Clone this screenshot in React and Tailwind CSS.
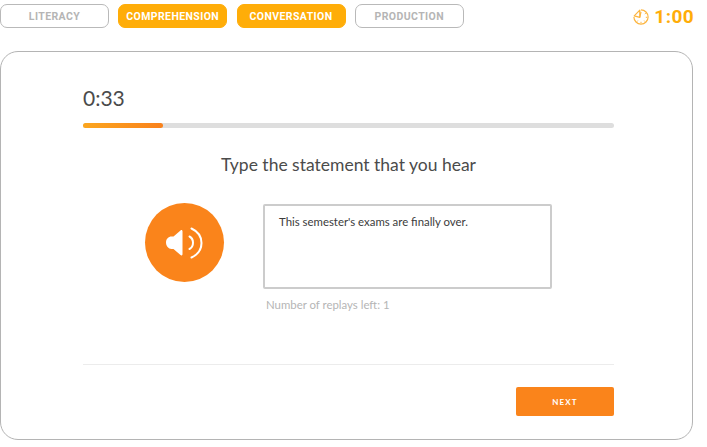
import React from "react";

const tabs = [
  { label: "LITERACY", active: false },
  { label: "COMPREHENSION", active: true },
  { label: "CONVERSATION", active: true },
  { label: "PRODUCTION", active: false },
];

function ClockIcon() {
  return (
    <svg width="16" height="16" viewBox="0 0 16 16" fill="none" stroke="#fcb53f" strokeWidth="1.200">
      <path d="M8 .9a7.100 7.100 0 1 1-7.100 7.100" />
      <path d="M6.800 1.200 1.200 6.800l5.600 1.500z" strokeLinejoin="round" />
      <path d="M6.800 8.300 8 2.800" />
      <path d="M8 12.800v1.400M4.800 11.600l-.8 1M11.200 11.600l.8 1M12.800 8.300h1.400M11.800 5l1-.7" strokeWidth="1" />
    </svg>
  );
}

function SpeakerIcon() {
  return (
    <svg width="39" height="32" viewBox="0 0 39 32" fill="none">
      <path d="M1 15.500c0-3.500 2.500-6 5.500-6h2L15.500 3.500c1-.9 2-.5 2 1v22.500c0 1.500-1 1.900-2 1L8.500 22h-2c-3 0-5.500-3-5.500-6.500z" fill="#fff" />
      <path d="M24.500 9.500c2.300 1.200 3.500 3.400 3.500 6.300s-1.200 5-3.500 6.200" stroke="#fff" strokeWidth="2" strokeLinecap="round" />
      <path d="M26.500 1.500c6 2.800 10 8 10 14.500s-4 11.700-10 14.500" stroke="#fff" strokeWidth="2" strokeLinecap="round" />
    </svg>
  );
}

export default function App() {
  return (
    <div className="w-[707px] h-[447px] bg-white overflow-hidden font-['Lato',sans-serif]">
      <div className="flex items-start h-[51px] pt-[4px]">
        <div className="flex gap-[9.250px]">
          {tabs.map((t) => (
            <div
              key={t.label}
              className={
                t.active
                  ? "w-[109px] h-[24px] pt-[1px] flex items-center justify-center rounded-[7px] border border-[#ffad08] bg-[#ffad08] text-white text-[10.500px] font-bold tracking-[0.4px] font-['Roboto',sans-serif]"
                  : "w-[109px] h-[24px] pt-[1px] flex items-center justify-center rounded-[7px] border border-[#b9b9b9] bg-white text-[#b5b5b5] text-[10.500px] font-bold tracking-[0.4px] font-['Roboto',sans-serif]"
              }
            >
              {t.label}
            </div>
          ))}
        </div>
        <div className="flex items-center ml-auto mr-[13px] mt-[1px] h-[24px] gap-[5px]">
          <ClockIcon />
          <span className="text-[#ffad08] text-[19px] font-bold font-['Roboto',sans-serif] tracking-[0.4px]">1:00</span>
        </div>
      </div>

      <div className="w-[693px] h-[389px] rounded-[18px] border border-[#b4b4b4] pl-[82px] pr-[78px] pt-[33px]">
        <div className="text-[21px] leading-[26px] text-[#4b4b4b]">0:33</div>
        <div className="mt-[12px] h-[5px] rounded-full bg-[#dedede]">
          <div className="h-full w-[80px] rounded-full bg-gradient-to-r from-[#fba61f] to-[#f9811c]" />
        </div>
        <div className="mt-[25px] text-center text-[17.500px] leading-[24px] text-[#4b4b4b]">
          Type the statement that you hear
        </div>
        <div className="flex mt-[27px] ml-[62px]">
          <div className="w-[79px] h-[79px] -mt-[1px] rounded-full bg-[#fa841b] flex items-center justify-center">
            <SpeakerIcon />
          </div>
          <div className="ml-[39px]">
            <div className="w-[289px] h-[85px] rounded-[2px] border-2 border-[#cccccc] px-[14px] py-[8px] text-[11.400px] leading-[16px] text-[#3c3c3c]">
              This semester's exams are finally over.
            </div>
            <div className="mt-[8px] ml-[3px] text-[11.400px] leading-[16px] text-[#b5b5b5]">Number of replays left: 1</div>
          </div>
        </div>
        <div className="mt-[51px] border-t border-[#ececec]" />
        <div className="flex justify-end mt-[22px]">
          <div className="w-[98px] h-[29px] rounded-[2px] bg-[#fa841b] flex items-center justify-center text-white text-[8px] font-bold tracking-[1.100px]">
            NEXT
          </div>
        </div>
      </div>
    </div>
  );
}
